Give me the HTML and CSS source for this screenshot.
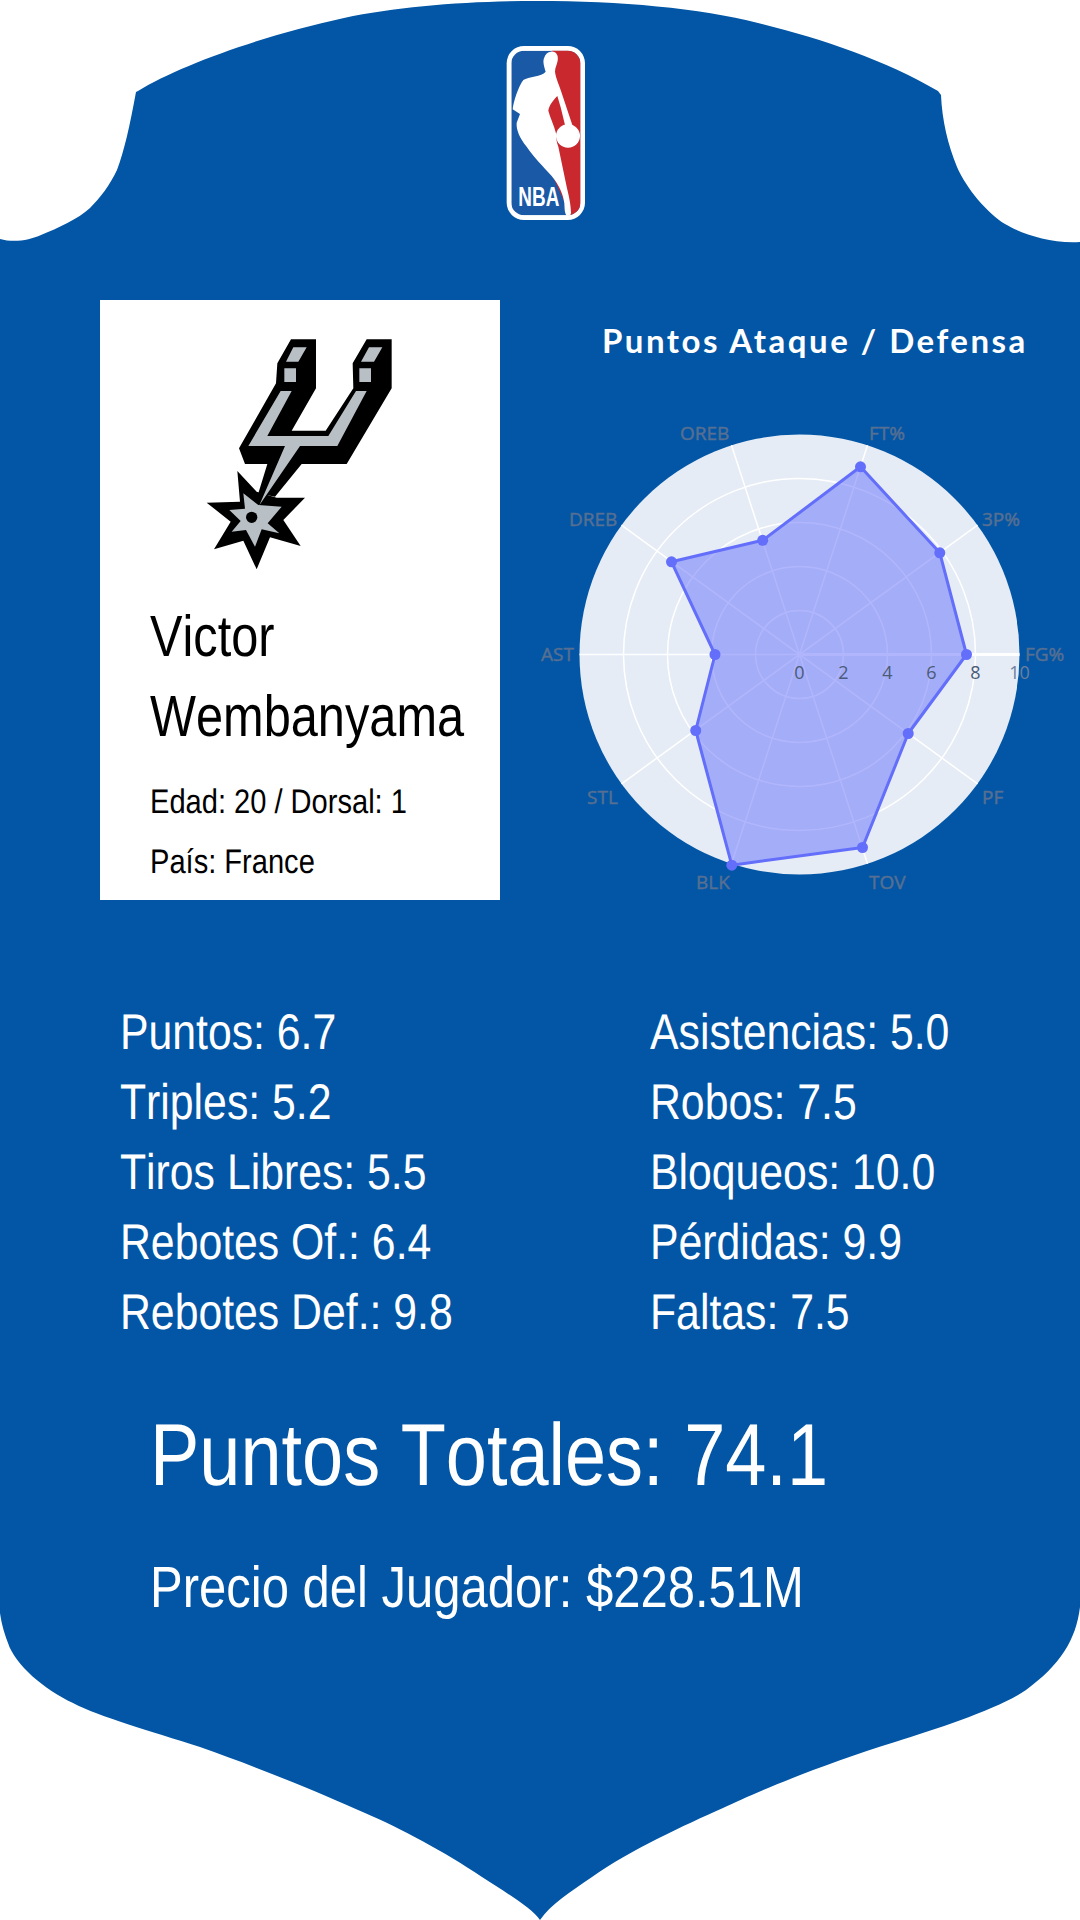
FILE: index.html
```html
<!DOCTYPE html>
<html lang="en">

<head>
  <meta charset="UTF-8">
  <title>Victor Wembanyama</title>
  <link rel="stylesheet" href="styles.css">
</head>

<body>
  <div class="card">
    <!-- fondo del escudo -->
    <svg class="card-shape" viewBox="0 0 1080 1920" xmlns="http://www.w3.org/2000/svg">
      <path fill="#0256a5" d="M0 239 C14 243 30 240 41 235 C58 228 78 219 90 208 C100 198 110 185 117 170 C124 152 130 125 136 92 L138 91 C180 65 265 35 344 18 C400 6 470 1 537 1 C620 1 700 8 758 23 C820 38 885 60 938 91 L941 95 C942 120 948 145 957 167 C966 188 988 214 1005 224 C1020 233 1050 244 1080 242 L1080 1607 C1076 1640 1060 1665 1026 1690 C1000 1708 940 1728 895 1742 C830 1762 760 1790 723 1808 C685 1825 630 1850 592 1877 C570 1892 550 1905 540 1920 C532 1908 505 1892 482 1877 C445 1852 400 1828 365 1813 C320 1793 260 1768 200 1747 C150 1731 100 1717 73 1703 C45 1690 15 1665 8 1643 C3 1630 1 1620 0 1613 Z" />
    </svg>

    <div class="content">
      <div class="league-logo">
        <svg width="140" height="200" viewBox="0 0 420 600" xmlns="http://www.w3.org/2000/svg">
          <defs>
            <clipPath id="logo_inner">
              <rect x="124" y="62" width="207" height="494" rx="38" />
            </clipPath>
          </defs>
          <rect x="110" y="48" width="235" height="522" rx="52" fill="#ffffff" />
          <g clip-path="url(#logo_inner)">
            <rect x="124" y="62" width="207" height="494" fill="#1a59a6" />
            <path fill="#c9282f" d="M245 60 L335 60 L335 560 L295 560 L285 520 L240 420 L200 300 L250 200 Z" />
          </g>
          <path fill="#ffffff" d="M243 65 C258 63 266 76 263 92 C261 104 255 112 255 125 C257 145 270 170 276 192 L302 270 L308 288 L285 285 L272 232 L262 198 C250 210 238 225 235 242 C240 262 252 285 258 310 C258 325 260 338 265 350 L290 470 C296 495 303 525 303 548 C303 556 296 558 291 557 C284 553 284 540 283 520 C280 495 268 465 245 438 C220 410 190 380 170 350 C150 325 138 300 140 278 L150 252 L128 238 C130 215 145 170 160 150 C175 140 215 140 227 125 C222 110 218 95 222 85 C226 72 233 66 243 65 Z" />
          <ellipse cx="294" cy="318" rx="36" ry="35" fill="#ffffff" />
          <text class="logo-text" x="145" y="527" textLength="123" lengthAdjust="spacingAndGlyphs">NBA</text>
        </svg>
      </div>

      <div class="top-row">
        <div class="player-box">
          <svg class="team-logo" width="220" height="260" viewBox="0 0 660 780" xmlns="http://www.w3.org/2000/svg">
            <!-- espuela negra -->
            <path fill="#000000" d="M303 58 L378 58 L378 205 L305 332 L407 332 L490 205 L488 130 L530 58 L605 58 L605 205 L470 432 L335 432 L255 530 L205 520 L232 432 L165 432 L147 385 L258 190 L262 130 Z" />
            <path fill="#000000" d="M142 453 L200 515 L260 533 L345 533 L280 600 L332 678 L240 652 L200 748 L160 662 L72 688 L122 605 L50 548 L150 545 Z" />
            <!-- partes grises -->
            <path fill="#b8c0c6" d="M272 213 L305 213 L232 348 L415 348 L498 213 L530 213 L442 378 L330 378 L208 556 L285 378 L175 378 Z" />
            <path fill="#b8c0c6" d="M310 82 L350 82 L325 125 L288 125 Z M283 145 L318 145 L318 186 L283 186 Z M537 82 L577 82 L552 125 L513 125 Z M508 145 L543 145 L543 186 L508 186 Z" />
            <path fill="#b8c0c6" d="M205 555 L275 560 L233 610 L268 640 L215 628 L195 680 L168 630 L125 635 L152 603 L118 570 L165 566 L160 520 Z" />
            <circle cx="185" cy="592" r="17" fill="#000000" />
          </svg>
          <h1 class="player-name squeezed">Victor<br>Wembanyama</h1>
          <div class="player-info squeezed">
            <div>Edad: 20 / Dorsal: 1</div>
            <div>País: France</div>
          </div>
        </div>

        <div class="chart-box">
          <div class="chart-title">Puntos Ataque / Defensa</div>
          <svg class="radar" width="550" height="520" viewBox="0 0 550 520" xmlns="http://www.w3.org/2000/svg">
            <circle cx="269.5" cy="254.5" r="220" fill="#e5ecf6" />
            <g class="radar-grid">
              <circle cx="269.5" cy="254.5" r="44" />
              <circle cx="269.5" cy="254.5" r="88" />
              <circle cx="269.5" cy="254.5" r="132" />
              <circle cx="269.5" cy="254.5" r="176" />
              <line x1="447.5" y1="125.2" x2="91.5" y2="383.8" />
              <line x1="337.5" y1="45.3" x2="201.5" y2="463.7" />
              <line x1="201.5" y1="45.3" x2="337.5" y2="463.7" />
              <line x1="91.5" y1="125.2" x2="447.5" y2="383.8" />
              <line x1="49.5" y1="254.5" x2="269.5" y2="254.5" />
            </g>
            <line class="radar-axis" x1="269.5" y1="254.5" x2="489.5" y2="254.5" />
            <polygon class="radar-area" points="436.5,254.5 409.8,152.8 330.5,66.8 232.7,140.3 141.5,161.8 185,254.5 165.7,330.5 201.8,465.2 332.5,447.5 378.2,333.5" />
            <g class="radar-dots">
              <circle cx="436.5" cy="254.5" r="5.5" />
              <circle cx="409.8" cy="152.8" r="5.5" />
              <circle cx="330.5" cy="66.8" r="5.5" />
              <circle cx="232.7" cy="140.3" r="5.5" />
              <circle cx="141.5" cy="161.8" r="5.5" />
              <circle cx="185" cy="254.5" r="5.5" />
              <circle cx="165.7" cy="330.5" r="5.5" />
              <circle cx="201.8" cy="465.2" r="5.5" />
              <circle cx="332.5" cy="447.5" r="5.5" />
              <circle cx="378.2" cy="333.5" r="5.5" />
            </g>
            <g class="radar-labels">
              <text x="495" y="261">FG%</text>
              <text x="452" y="126">3P%</text>
              <text x="339" y="40">FT%</text>
              <text x="150" y="40">OREB</text>
              <text x="39" y="126">DREB</text>
              <text x="11" y="261">AST</text>
              <text x="57" y="404">STL</text>
              <text x="166" y="489">BLK</text>
              <text x="339" y="489">TOV</text>
              <text x="452" y="404">PF</text>
            </g>
            <g class="radar-ticks">
              <text x="269.5" y="279">0</text>
              <text x="313.5" y="279">2</text>
              <text x="357.5" y="279">4</text>
              <text x="401.5" y="279">6</text>
              <text x="445.5" y="279">8</text>
              <text class="tick-edge" x="489.5" y="279">10</text>
            </g>
          </svg>
        </div>
      </div>

      <div class="stats">
        <div class="stats-col squeezed">
          <div>Puntos: 6.7</div>
          <div>Triples: 5.2</div>
          <div>Tiros Libres: 5.5</div>
          <div>Rebotes Of.: 6.4</div>
          <div>Rebotes Def.: 9.8</div>
        </div>
        <div class="stats-col squeezed">
          <div>Asistencias: 5.0</div>
          <div>Robos: 7.5</div>
          <div>Bloqueos: 10.0</div>
          <div>Pérdidas: 9.9</div>
          <div>Faltas: 7.5</div>
        </div>
      </div>

      <div class="total-points squeezed">Puntos Totales: 74.1</div>
      <div class="player-price squeezed">Precio del Jugador: $228.51M</div>
    </div>
  </div>
</body>

</html>
```

FILE: styles.css
```css
body {
  margin: 0;
  background: #ffffff;
  font-family: "Liberation Sans", Arial, sans-serif;
}
.card {
  position: relative;
  width: 1080px;
  height: 1920px;
  overflow: hidden;
}
.card-shape {
  position: absolute;
  top: 0;
  left: 0;
  width: 1080px;
  height: 1920px;
}
.content {
  position: relative;
  display: flex;
  flex-direction: column;
  padding-top: 30px;
}
.league-logo {
  height: 200px;
  padding-left: 470px;
}
.league-logo svg,
.team-logo,
.radar {
  display: block;
}
.logo-text {
  font-family: "Liberation Sans", Arial, sans-serif;
  font-size: 84px;
  font-weight: 700;
  fill: #ffffff;
}
/* el texto original esta comprimido en horizontal */
.squeezed {
  transform: scaleX(0.84);
  transform-origin: left center;
  white-space: nowrap;
  font-kerning: none;
  text-rendering: geometricPrecision;
}
.top-row {
  display: flex;
  align-items: flex-start;
  margin-top: 70px;
  padding-left: 100px;
}
.player-box {
  box-sizing: border-box;
  width: 400px;
  height: 600px;
  padding-top: 20px;
  background: #ffffff;
  color: #000000;
}
.team-logo {
  margin-left: 90px;
}
.player-name {
  margin: 17px 0 0 50px;
  font-size: 58px;
  font-weight: 400;
  line-height: 80px;
}
.player-info {
  margin: 15px 0 0 50px;
  font-size: 34px;
  line-height: 60px;
  transform: scaleX(0.855);
}
.chart-box {
  width: 550px;
  margin-left: 30px;
}
.chart-title {
  box-sizing: border-box;
  height: 100px;
  padding: 22px 0 0 72px;
  font-family: Lato, sans-serif;
  font-size: 33px;
  font-weight: 700;
  line-height: 36px;
  letter-spacing: 2.5px;
  color: #ffffff;
  white-space: nowrap;
}
.radar-grid circle,
.radar-grid line {
  fill: none;
  stroke: #ffffff;
  stroke-width: 1.5;
}
.radar-axis {
  stroke: #ffffff;
  stroke-width: 3;
}
.radar-area {
  fill: rgba(99, 110, 250, 0.5);
  stroke: #636efa;
  stroke-width: 3;
  stroke-linejoin: round;
}
.radar-dots circle {
  fill: #636efa;
}
.radar-labels text {
  font-family: "Open Sans", sans-serif;
  font-size: 19px;
  fill: #566f92;
  stroke: #566f92;
  stroke-width: 0.5;
}
.radar-ticks text {
  font-family: "Open Sans", sans-serif;
  font-size: 18px;
  fill: #4b5b78;
  text-anchor: middle;
}
.radar-ticks .tick-edge {
  fill: #6b7f9c;
}
.stats {
  display: grid;
  grid-template-columns: 530px 1fr;
  margin-top: 77px;
  padding-left: 120px;
  color: #ffffff;
  font-size: 50px;
  line-height: 70px;
}
.stats-col {
  transform: scaleX(0.855);
}
.total-points {
  margin: 58px 0 0 150px;
  color: #ffffff;
  font-size: 88px;
  line-height: 100px;
}
.player-price {
  margin: 48px 0 0 150px;
  color: #ffffff;
  font-size: 58px;
  line-height: 70px;
  transform: scaleX(0.845);
}
```
